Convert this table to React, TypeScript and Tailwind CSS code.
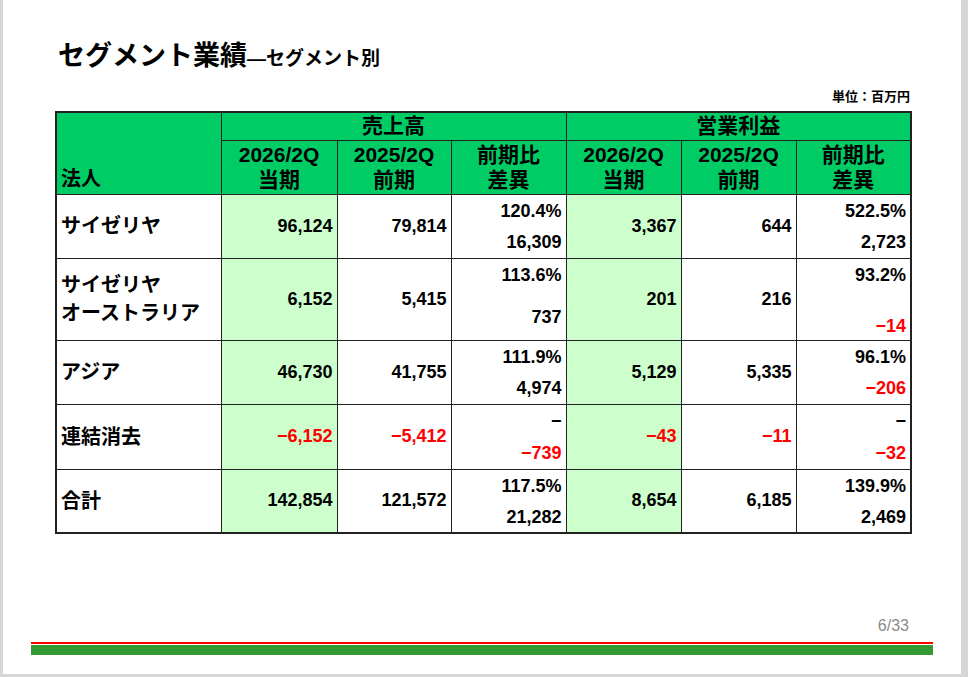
import React from 'react';

type Diff = { pct: string; diff: string; neg?: boolean; pb?: string };
type Row = {
  name: string[];
  h: string;
  inner: string;
  sales: [string, string];
  salesDiff: Diff;
  op: [string, string];
  opDiff: Diff;
  neg?: boolean;
};

const rows: Row[] = [
  {
    name: ['サイゼリヤ'],
    h: 'h-[64px]',
    inner: 'h-[62px]',
    sales: ['96,124', '79,814'],
    salesDiff: { pct: '120.4%', diff: '16,309' },
    op: ['3,367', '644'],
    opDiff: { pct: '522.5%', diff: '2,723' },
  },
  {
    name: ['サイゼリヤ', 'オーストラリア'],
    h: 'h-[82px]',
    inner: 'h-[80px]',
    sales: ['6,152', '5,415'],
    salesDiff: { pct: '113.6%', diff: '737', pb: 'pb-[9px]' },
    op: ['201', '216'],
    opDiff: { pct: '93.2%', diff: '−14', neg: true, pb: 'pb-[0px]' },
  },
  {
    name: ['アジア'],
    h: 'h-[64px]',
    inner: 'h-[62px]',
    sales: ['46,730', '41,755'],
    salesDiff: { pct: '111.9%', diff: '4,974' },
    op: ['5,129', '5,335'],
    opDiff: { pct: '96.1%', diff: '−206', neg: true },
  },
  {
    name: ['連結消去'],
    h: 'h-[65px]',
    inner: 'h-[63px]',
    sales: ['−6,152', '−5,412'],
    salesDiff: { pct: '−', diff: '−739', neg: true },
    op: ['−43', '−11'],
    opDiff: { pct: '−', diff: '−32', neg: true },
    neg: true,
  },
  {
    name: ['合計'],
    h: 'h-[64px]',
    inner: 'h-[62px]',
    sales: ['142,854', '121,572'],
    salesDiff: { pct: '117.5%', diff: '21,282' },
    op: ['8,654', '6,185'],
    opDiff: { pct: '139.9%', diff: '2,469' },
  },
];

const cell = 'border border-[#222] p-0';

function NumCell({ v, neg, green }: { v: string; neg?: boolean; green?: boolean }) {
  return (
    <td className={`${cell} ${green ? 'bg-[#ccffcc]' : ''} text-right align-middle pr-[4px] text-[18px] ${neg ? 'text-[#ff0000]' : 'text-black'}`}>
      {v}
    </td>
  );
}

function DiffCell({ d, inner }: { d: Diff; inner: string }) {
  return (
    <td className={`${cell} align-top`}>
      <div className={`flex ${inner} flex-col items-end justify-between pr-[4px] pt-[3px] ${d.pb ?? 'pb-[2px]'} text-[18px] leading-[26px]`}>
        <span className="text-black">{d.pct}</span>
        <span className={d.neg ? 'text-[#ff0000]' : 'text-black'}>{d.diff}</span>
      </div>
    </td>
  );
}

export default function App() {
  return (
    <div className="flex h-[677px] w-[968px] bg-[#d6d6d6] font-['Liberation_Sans','Noto_Sans_CJK_JP',sans-serif] font-bold">
      <div className="ml-[3px] flex h-[674px] w-[958px] flex-col bg-white">
        {/* Title */}
        <div className="flex items-baseline pl-[55px] pt-[40px] leading-[32px] text-black">
          <span className="text-[27px]">セグメント業績</span>
          <span className="text-[19px]">―セグメント別</span>
        </div>
        <div className="mt-[14px] pr-[51px] text-right text-[13px] leading-[16px]">単位：百万円</div>

        {/* Table */}
        <table className="ml-[52px] mt-[6px] w-[855px] table-fixed border-collapse border-2 border-[#222] text-black">
          <colgroup>
            <col className="w-[165px]" />
            <col className="w-[116px]" />
            <col className="w-[114px]" />
            <col className="w-[115px]" />
            <col className="w-[115px]" />
            <col className="w-[115px]" />
            <col className="w-[115px]" />
          </colgroup>
          <thead>
            <tr className="h-[28px] bg-[#00cc66]">
              <td rowSpan={2} className={`${cell} align-bottom pb-[2px] pl-[4px] text-left text-[20px] leading-[26px]`}>
                法人
              </td>
              <td colSpan={3} className={`${cell} text-center text-[21px] leading-[26px]`}>売上高</td>
              <td colSpan={3} className={`${cell} text-center text-[21px] leading-[26px]`}>営業利益</td>
            </tr>
            <tr className="h-[54px] bg-[#00cc66]">
              {['当期', '前期', '差異', '当期', '前期', '差異'].map((b, i) => (
                <td key={i} className={`${cell} text-center text-[21px] leading-[25px]`}>
                  <div>{['2026/2Q', '2025/2Q', '前期比'][i % 3]}</div>
                  <div>{b}</div>
                </td>
              ))}
            </tr>
          </thead>
          <tbody>
            {rows.map((r) => (
              <tr key={r.name.join('')} className={r.h}>
                <td className={`${cell} pl-[4px] text-left text-[20px] leading-[28px]`}>
                  {r.name.map((n) => (
                    <div key={n}>{n}</div>
                  ))}
                </td>
                <NumCell v={r.sales[0]} neg={r.neg} green />
                <NumCell v={r.sales[1]} neg={r.neg} />
                <DiffCell d={r.salesDiff} inner={r.inner} />
                <NumCell v={r.op[0]} neg={r.neg} green />
                <NumCell v={r.op[1]} neg={r.neg} />
                <DiffCell d={r.opDiff} inner={r.inner} />
              </tr>
            ))}
          </tbody>
        </table>

        <div className="flex-1" />

        {/* Footer */}
        <div className="pr-[52px] text-right text-[16px] font-normal leading-[18px] text-[#8a8a8a]">6/33</div>
        <div className="mx-[28px] mt-[7px] h-[2px] bg-[#ff0000]" />
        <div className="mx-[28px] mt-[1px] h-[10px] bg-[#339933]" />
        <div className="h-[19px]" />
      </div>
    </div>
  );
}
